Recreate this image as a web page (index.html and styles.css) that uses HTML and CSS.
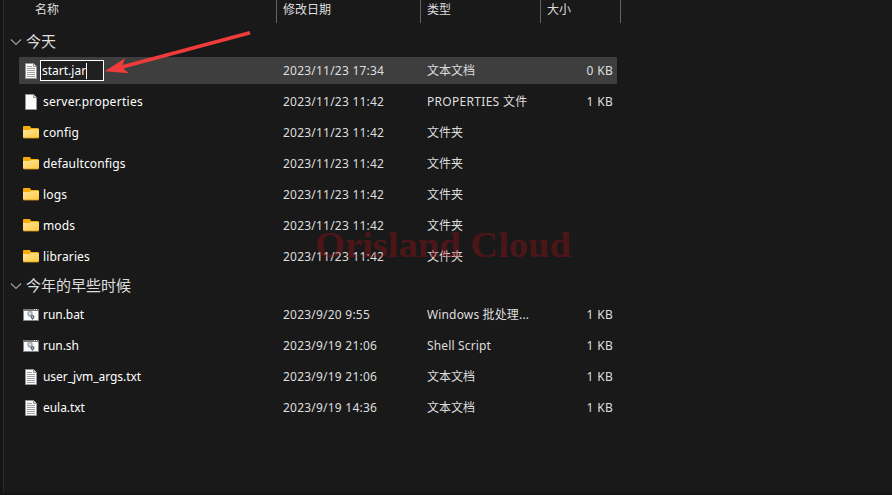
FILE: index.html
```
<!DOCTYPE html>
<html lang="zh-CN">
<head>
<meta charset="utf-8">
<title>文件</title>
<link rel="stylesheet" href="styles.css">
</head>
<body>
<svg class="defs" width="0" height="0">
  <defs>
    <linearGradient id="gold" x1="0" y1="0" x2="1" y2="1"><stop offset="0" stop-color="#ffe59a"/><stop offset="1" stop-color="#ffca3e"/></linearGradient>
    <symbol id="folder" viewBox="0 0 16 16"><path d="M0 3V2q0-1 1-1h6l1 2h7l1 1v7H0z" fill="#f5ae08"/><path d="M0 5h6.5l1.500-1h8v8q0 1-1 1H1q-1 0-1-1z" fill="url(#gold)"/><path d="M.5 13h15" stroke="#d99b19" stroke-width=".8"/></symbol>
    <symbol id="page" viewBox="0 0 16 16"><path d="M2.500.5h8l3 3v12h-11z" fill="#fafafa" stroke="#969696"/><path d="M10.500.5v3h3" fill="#e0e0e0" stroke="#969696"/></symbol>
    <symbol id="text" viewBox="0 0 16 16"><use href="#page"/><path d="M4 3.500h5M4 5.500h8M4 7.500h8M4 9.500h8M4 11.500h8M4 13.500h8" stroke="#a2a2a2"/></symbol>
    <symbol id="script" viewBox="0 0 16 16"><path d="M.5 2.500h15v11H.5z" fill="#fafafa" stroke="#858585"/><path d="M0 2h16v2H0z" fill="#777"/><path d="M11 2.500h1M13 2.500h1" stroke="#ddd"/><circle cx="7" cy="6.500" r="2" fill="#d9e4ed" stroke="#a3adb8" stroke-width="1.600"/><circle cx="9.500" cy="10" r="1.300" fill="#ddd" stroke="#59616a" stroke-width="1.300"/><path d="M5.500 9h2M9.500 12v1" stroke="#8d969f"/></symbol>
    <symbol id="chevron" viewBox="0 0 12 8"><path d="M1 1.500l5 5 5-5" fill="none" stroke="#a0a0a0" stroke-width="1.100"/></symbol>
  </defs>
</svg>
<main class="explorer">
  <header class="columns"><span class="name-head">名称</span><span>修改日期</span><span>类型</span><span>大小</span></header>
  <section>
    <h2><svg><use href="#chevron"/></svg><span>今天</span></h2>
    <div class="row selected"><svg class="icon"><use href="#text"/></svg><span class="name"><span class="rename">start.jar<i class="caret"></i></span></span><span class="date">2023/11/23 17:34</span><span>文本文档</span><span class="size">0 KB</span></div>
    <div class="row"><svg class="icon"><use href="#page"/></svg><span class="name wide">server.properties</span><span class="date">2023/11/23 11:42</span><span class="wide">PROPERTIES 文件</span><span class="size">1 KB</span></div>
    <div class="row"><svg class="icon"><use href="#folder"/></svg><span class="name">config</span><span class="date">2023/11/23 11:42</span><span>文件夹</span></div>
    <div class="row"><svg class="icon"><use href="#folder"/></svg><span class="name">defaultconfigs</span><span class="date">2023/11/23 11:42</span><span>文件夹</span></div>
    <div class="row"><svg class="icon"><use href="#folder"/></svg><span class="name">logs</span><span class="date">2023/11/23 11:42</span><span>文件夹</span></div>
    <div class="row"><svg class="icon"><use href="#folder"/></svg><span class="name">mods</span><span class="date">2023/11/23 11:42</span><span>文件夹</span></div>
    <div class="row"><svg class="icon"><use href="#folder"/></svg><span class="name">libraries</span><span class="date">2023/11/23 11:42</span><span>文件夹</span></div>
  </section>
  <section>
    <h2><svg><use href="#chevron"/></svg><span>今年的早些时候</span></h2>
    <div class="row"><svg class="icon"><use href="#script"/></svg><span class="name tight">run.bat</span><span class="date">2023/9/20 9:55</span><span class="windows">Windows 批处理...</span><span class="size">1 KB</span></div>
    <div class="row"><svg class="icon"><use href="#script"/></svg><span class="name tight">run.sh</span><span class="date">2023/9/19 21:06</span><span class="windows">Shell Script</span><span class="size">1 KB</span></div>
    <div class="row"><svg class="icon"><use href="#text"/></svg><span class="name tight">user_jvm_args.txt</span><span class="date">2023/9/19 21:06</span><span>文本文档</span><span class="size">1 KB</span></div>
    <div class="row"><svg class="icon"><use href="#text"/></svg><span class="name tight">eula.txt</span><span class="date">2023/9/19 14:36</span><span>文本文档</span><span class="size">1 KB</span></div>
  </section>
  <svg class="overlay" viewBox="0 0 892 495">
    <text class="watermark" x="315" y="257" textLength="256" lengthAdjust="spacingAndGlyphs">Orisland Cloud</text>
    <path class="arrow" d="M249.500 31L250.500 34.500L123.500 68.500L128.700 73.300L104.700 71.300L125 58.300L122.500 65z"/>
  </svg>
</main>
</body>
</html>
```
FILE: styles.css
```
* { box-sizing: border-box; }
body {
  margin: 0;
  background: #191919;
  color: #dedede;
  font: 12px/16px "Noto Sans", "Noto Sans CJK SC", sans-serif;
}
.defs { position: absolute; }
.explorer {
  position: relative;
  width: 892px;
  height: 495px;
  overflow: hidden;
  border-bottom: 2px solid #151214;
  background: linear-gradient(90deg, #141414 0 3px, #2b2b2b 3px 4px, #191919 4px);
}
.columns {
  display: grid;
  grid-template-columns: 257px 144px 120px 80px;
  height: 23px;
  margin-left: 20px;
}
.columns span {
  padding: 2px 0 0 6px;
  border-right: 1px solid #636363;
}
.columns .name-head { padding-left: 15px; }
.columns + section { padding-top: 5px; }
h2 {
  display: flex;
  align-items: center;
  gap: 4px;
  height: 27px;
  margin: 0;
  padding-left: 10px;
  font-size: 15px;
  font-weight: 400;
}
h2 svg { width: 12px; height: 8px; }
h2 span { padding-bottom: 2px; }
.row {
  display: grid;
  grid-template-columns: 20px 240px 144px 126px 60px;
  align-items: center;
  height: 27px;
  width: 598px;
  margin: 2px 0 4px 19px;
  padding: 0 4px;
  border-radius: 1px;
  white-space: nowrap;
}
.row + .row { margin-top: 4px; }
.row:last-child { margin-bottom: 2px; }
.row.selected { background: #3e3e3e; }
.icon { width: 16px; height: 16px; }
.name { color: #fff; letter-spacing: .15px; }
.name.wide { letter-spacing: .3px; }
.name.tight { letter-spacing: -.05px; }
.wide { letter-spacing: .3px; }
.windows { letter-spacing: .15px; }
.date { letter-spacing: .22px; }
.size { text-align: right; letter-spacing: .3px; }
.rename {
  display: flex;
  align-items: center;
  width: 64px;
  height: 21px;
  margin-left: -3px;
  padding-left: 1px;
  border: 1px solid #fff;
  background: #202020;
  letter-spacing: 0;
}
.caret { width: 1px; height: 16px; background: #fff; }
.overlay { position: absolute; inset: 0; width: 892px; height: 495px; }
.watermark {
  font: bold 36px "Liberation Serif", serif;
  fill: #a31217;
  fill-opacity: .4;
}
.arrow { fill: #ef3b39; }
```
